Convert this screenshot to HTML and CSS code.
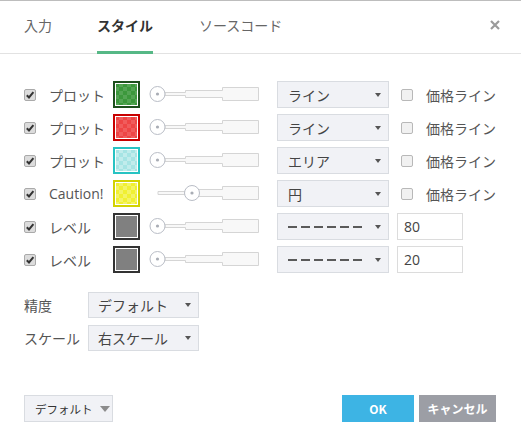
FILE: index.html
```html
<!DOCTYPE html>
<html lang="ja">
<head>
  <meta charset="UTF-8">
  <meta name="viewport" content="width=device-width, initial-scale=1.0">
  <title>スタイル</title>
  <link rel="stylesheet" href="styles.css">
</head>
<body>
  <div class="dialog">

    <!-- Tabs -->
    <div class="tabs">
      <a class="tab" href="#">入力</a>
      <a class="tab active" href="#">スタイル</a>
      <a class="tab" href="#">ソースコード</a>
      <span class="close">
        <svg width="10" height="10" viewBox="0 0 10 10"><path d="M1 1L9 9M9 1L1 9" stroke="#9a9a9a" stroke-width="2.2"/></svg>
      </span>
    </div>

    <!-- Plots -->
    <div class="content">
      <div class="row">
        <span class="check on"><svg width="10" height="10" viewBox="0 0 10 10"><path d="M1.8 5.2L4 7.4L8.4 2.2" stroke="#333" stroke-width="2" fill="none"/></svg></span>
        <span class="label">プロット</span>
        <span class="swatch green"></span>
        <svg class="slider" width="110" height="27" viewBox="0 0 110 27"><path d="M16 11.5H36.5V9.5H73.5V6.5H109.5V19.5H73.5V16.5H36.5V14.5H16Z" fill="#f8f8f8" stroke="#d5d5d5"/><circle cx="8.5" cy="13" r="7.5" fill="#fff" stroke="#b9bdc6"/><circle cx="8.5" cy="13" r="1.6" fill="#a9adb5"/></svg>
        <div class="select"><span>ライン</span><i class="caret"></i></div>
        <span class="check"></span>
        <span class="opt">価格ライン</span>
      </div>

      <div class="row">
        <span class="check on"><svg width="10" height="10" viewBox="0 0 10 10"><path d="M1.8 5.2L4 7.4L8.4 2.2" stroke="#333" stroke-width="2" fill="none"/></svg></span>
        <span class="label">プロット</span>
        <span class="swatch red"></span>
        <svg class="slider" width="110" height="27" viewBox="0 0 110 27"><path d="M16 11.5H36.5V9.5H73.5V6.5H109.5V19.5H73.5V16.5H36.5V14.5H16Z" fill="#f8f8f8" stroke="#d5d5d5"/><circle cx="8.5" cy="13" r="7.5" fill="#fff" stroke="#b9bdc6"/><circle cx="8.5" cy="13" r="1.6" fill="#a9adb5"/></svg>
        <div class="select"><span>ライン</span><i class="caret"></i></div>
        <span class="check"></span>
        <span class="opt">価格ライン</span>
      </div>

      <div class="row">
        <span class="check on"><svg width="10" height="10" viewBox="0 0 10 10"><path d="M1.8 5.2L4 7.4L8.4 2.2" stroke="#333" stroke-width="2" fill="none"/></svg></span>
        <span class="label">プロット</span>
        <span class="swatch cyan"></span>
        <svg class="slider" width="110" height="27" viewBox="0 0 110 27"><path d="M16 11.5H36.5V9.5H73.5V6.5H109.5V19.5H73.5V16.5H36.5V14.5H16Z" fill="#f8f8f8" stroke="#d5d5d5"/><circle cx="8.5" cy="13" r="7.5" fill="#fff" stroke="#b9bdc6"/><circle cx="8.5" cy="13" r="1.6" fill="#a9adb5"/></svg>
        <div class="select"><span>エリア</span><i class="caret"></i></div>
        <span class="check"></span>
        <span class="opt">価格ライン</span>
      </div>

      <div class="row">
        <span class="check on"><svg width="10" height="10" viewBox="0 0 10 10"><path d="M1.8 5.2L4 7.4L8.4 2.2" stroke="#333" stroke-width="2" fill="none"/></svg></span>
        <span class="label">Caution!</span>
        <span class="swatch yellow"></span>
        <svg class="slider" width="110" height="27" viewBox="0 0 110 27"><path d="M9 11.5H36.5V9.5H73.5V6.5H109.5V19.5H73.5V16.5H36.5V14.5H9Z" fill="#f8f8f8" stroke="#d5d5d5"/><circle cx="43" cy="13" r="7.5" fill="#fff" stroke="#b9bdc6"/><circle cx="43" cy="13" r="1.6" fill="#a9adb5"/></svg>
        <div class="select"><span>円</span><i class="caret"></i></div>
        <span class="check"></span>
        <span class="opt">価格ライン</span>
      </div>

      <div class="row">
        <span class="check on"><svg width="10" height="10" viewBox="0 0 10 10"><path d="M1.8 5.2L4 7.4L8.4 2.2" stroke="#333" stroke-width="2" fill="none"/></svg></span>
        <span class="label">レベル</span>
        <span class="swatch gray"></span>
        <svg class="slider" width="110" height="27" viewBox="0 0 110 27"><path d="M16 11.5H36.5V9.5H73.5V6.5H109.5V19.5H73.5V16.5H36.5V14.5H16Z" fill="#f8f8f8" stroke="#d5d5d5"/><circle cx="8.5" cy="13" r="7.5" fill="#fff" stroke="#b9bdc6"/><circle cx="8.5" cy="13" r="1.6" fill="#a9adb5"/></svg>
        <div class="select"><span class="dashes"></span><i class="caret"></i></div>
        <span class="num">80</span>
      </div>

      <div class="row">
        <span class="check on"><svg width="10" height="10" viewBox="0 0 10 10"><path d="M1.8 5.2L4 7.4L8.4 2.2" stroke="#333" stroke-width="2" fill="none"/></svg></span>
        <span class="label">レベル</span>
        <span class="swatch gray"></span>
        <svg class="slider" width="110" height="27" viewBox="0 0 110 27"><path d="M16 11.5H36.5V9.5H73.5V6.5H109.5V19.5H73.5V16.5H36.5V14.5H16Z" fill="#f8f8f8" stroke="#d5d5d5"/><circle cx="8.5" cy="13" r="7.5" fill="#fff" stroke="#b9bdc6"/><circle cx="8.5" cy="13" r="1.6" fill="#a9adb5"/></svg>
        <div class="select"><span class="dashes"></span><i class="caret"></i></div>
        <span class="num">20</span>
      </div>

      <!-- Settings -->
      <div class="settings">
        <div class="field">
          <span class="label">精度</span>
          <div class="select small"><span>デフォルト</span><i class="caret"></i></div>
        </div>
        <div class="field">
          <span class="label">スケール</span>
          <div class="select small"><span>右スケール</span><i class="caret"></i></div>
        </div>
      </div>
    </div>

    <!-- Footer -->
    <div class="footer">
      <button class="btn-default">デフォルト<i class="caret big"></i></button>
      <button class="btn ok">OK</button>
      <button class="btn cancel">キャンセル</button>
    </div>
  </div>
</body>
</html>
```

FILE: styles.css
```css
body {
  margin: 0;
  font-family: "Open Sans", "Noto Sans CJK JP", sans-serif;
  font-size: 14px;
  color: #555;
  background: #fff;
}

.dialog {
  border-top: 1px solid #bdbdbd;
  height: 445px;
}

.tabs {
  display: flex;
  height: 52px;
  padding: 0 21px 0 24px;
  border-bottom: 1px solid #e2e2e2;
}

.tab {
  box-sizing: border-box;
  height: 53px;
  line-height: 48px;
  margin-right: 45px;
  color: #666;
  text-decoration: none;
  font-family: "Noto Sans CJK JP", sans-serif;
  border-bottom: 3px solid transparent;
}

.tab.active {
  color: #333;
  font-weight: bold;
  border-bottom-color: #56b886;
  margin-right: 46px;
}

.close {
  display: block;
  margin-left: auto;
  margin-top: 19px;
  height: 10px;
  line-height: 0;
}

.content {
  padding: 27px 0 0 24px;
}

.row {
  display: flex;
  align-items: center;
  height: 27px;
  margin-bottom: 6px;
}

.check {
  display: flex;
  align-items: center;
  justify-content: center;
  box-sizing: border-box;
  width: 12px;
  height: 12px;
  border: 1px solid #b8b8b8;
  border-radius: 2px;
  background: #f1f1f1;
  margin-right: 13px;
}

.check.on {
  background: #dcdcdc;
  border-color: #aaa;
}

.label {
  width: 64px;
  color: #555;
}

.swatch {
  box-sizing: border-box;
  width: 27px;
  height: 27px;
  border: 2px solid;
  padding: 1px;
  margin-right: 9px;
  background-clip: content-box;
  background-image: repeating-conic-gradient(rgba(255, 255, 255, 0.12) 0 25%, transparent 0 50%);
  background-size: 8px 8px;
}

.swatch.green {
  border-color: #1d4f1d;
  background-color: #3c983c;
}

.swatch.red {
  border-color: #c80000;
  background-color: #ee4545;
}

.swatch.cyan {
  border-color: #27c3c3;
  background-color: #a6e4e4;
  background-image: repeating-conic-gradient(rgba(255, 255, 255, 0.3) 0 25%, transparent 0 50%);
}

.swatch.yellow {
  border-color: #d2d200;
  background-color: #f0f032;
  background-image: repeating-conic-gradient(rgba(255, 255, 255, 0.25) 0 25%, transparent 0 50%);
}

.swatch.gray {
  border-color: #333;
  background-color: #808080;
  background-image: none;
}

.slider {
  display: block;
  margin-right: 18px;
}

.select {
  display: flex;
  align-items: center;
  box-sizing: border-box;
  width: 112px;
  height: 27px;
  padding: 0 7px 0 10px;
  margin-right: 12px;
  background: #f1f2f6;
  border: 1px solid #d9dce1;
  color: #444;
  font-family: "Noto Sans CJK JP", sans-serif;
}

.select.small {
  width: 111px;
  height: 26px;
  padding-left: 9px;
}

.caret {
  margin-left: auto;
  width: 0;
  height: 0;
  border-left: 3.5px solid transparent;
  border-right: 3.5px solid transparent;
  border-top: 4px solid #555;
}

.caret.big {
  margin-left: 7px;
  border-left-width: 5px;
  border-right-width: 5px;
  border-top: 6px solid #8c8c8c;
}

.dashes {
  display: block;
  width: 75px;
  height: 2px;
  background: repeating-linear-gradient(to right, #5a5a5a 0 9px, transparent 9px 13px);
}

.opt {
  font-family: "Noto Sans CJK JP", sans-serif;
  color: #555;
}

.num {
  display: flex;
  align-items: center;
  box-sizing: border-box;
  width: 66px;
  height: 27px;
  margin-left: -4px;
  padding-left: 6px;
  border: 1px solid #dcdcdc;
  color: #444;
}

.settings {
  margin-top: 19px;
}

.field {
  display: flex;
  align-items: center;
  height: 26px;
  margin-bottom: 7px;
}

.field:last-child {
  margin-bottom: 0;
}

.field .label {
  font-family: "Noto Sans CJK JP", sans-serif;
}

.footer {
  display: flex;
  margin-top: 44px;
  padding: 0 25px 0 24px;
}

.footer button {
  box-sizing: border-box;
  height: 27px;
  font-family: "Noto Sans CJK JP", sans-serif;
  font-size: 12px;
  white-space: nowrap;
  cursor: pointer;
}

.btn-default {
  display: flex;
  align-items: center;
  width: 89px;
  padding: 0 0 0 10px;
  background: #f1f2f6;
  border: 1px solid #d9dce1;
  color: #333;
  font-size: 11.5px !important;
}

.btn {
  border: none;
  color: #fff;
  font-weight: bold;
}

.btn.ok {
  margin-left: auto;
  width: 72px;
  background: #3db4e4;
}

.btn.cancel {
  margin-left: 5px;
  width: 77px;
  background: #9c9ea5;
}
```
